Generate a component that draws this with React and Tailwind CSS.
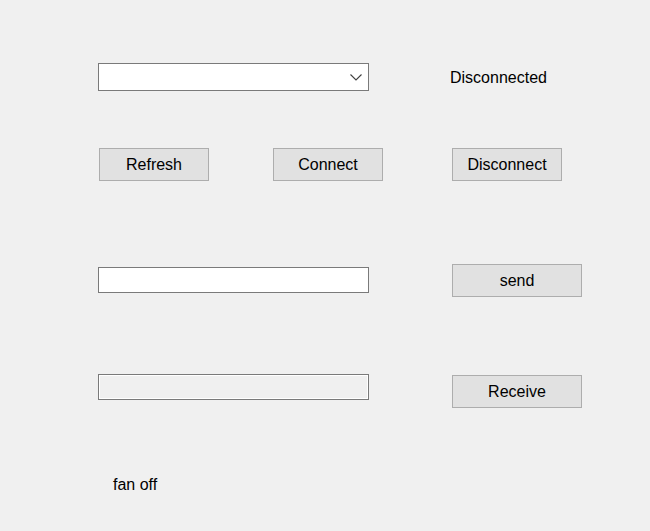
import React, { useState } from 'react';

const Button = ({ children, className = '' }) => (
    <button
        className={`flex items-center justify-center h-[33px] border border-[#adadad] bg-[#e1e1e1] text-[16px] leading-4 text-black ${className}`}
    >
        {children}
    </button>
);

const App = () => {
    const [status] = useState('Disconnected');

    return (
        <div className="w-[650px] h-[531px] bg-[#f0f0f0] text-black text-[16px] leading-4 font-['Liberation_Sans',Arial,sans-serif] flex flex-col overflow-hidden">
            {/* Port select + status */}
            <div className="flex items-start mt-[63px]">
                <div className="ml-[98px] w-[271px] h-[28px] border border-[#7a7a7a] bg-white flex items-center justify-end pr-[6px]">
                    <svg width="12" height="7" viewBox="0 0 12 7" className="mt-[1px]">
                        <path d="M0.5 0.5 L6 6 L11.5 0.5" fill="none" stroke="#404040" strokeWidth="1.1" />
                    </svg>
                </div>
                <span className="ml-[81px] mt-[7px]">{status}</span>
            </div>

            {/* Refresh / Connect / Disconnect */}
            <div className="flex mt-[57px]">
                <Button className="ml-[99px] w-[110px]">Refresh</Button>
                <Button className="ml-[64px] w-[110px]">Connect</Button>
                <Button className="ml-[69px] w-[110px]">Disconnect</Button>
            </div>

            {/* Send row */}
            <div className="flex items-start mt-[83px]">
                <input className="ml-[98px] mt-[3px] w-[271px] h-[26px] border border-[#7a7a7a] bg-white outline-none" />
                <Button className="ml-[83px] w-[130px]">send</Button>
            </div>

            {/* Receive row */}
            <div className="flex items-start mt-[77px]">
                <input
                    readOnly
                    className="ml-[98px] w-[271px] h-[26px] border border-[#7a7a7a] bg-[#f0f0f0] shadow-[inset_0_0_0_1px_#ffffff] outline-none"
                />
                <Button className="ml-[83px] mt-[1px] w-[130px]">Receive</Button>
            </div>

            <span className="ml-[113px] mt-[69px]">fan off</span>
        </div>
    );
};

export default App;
